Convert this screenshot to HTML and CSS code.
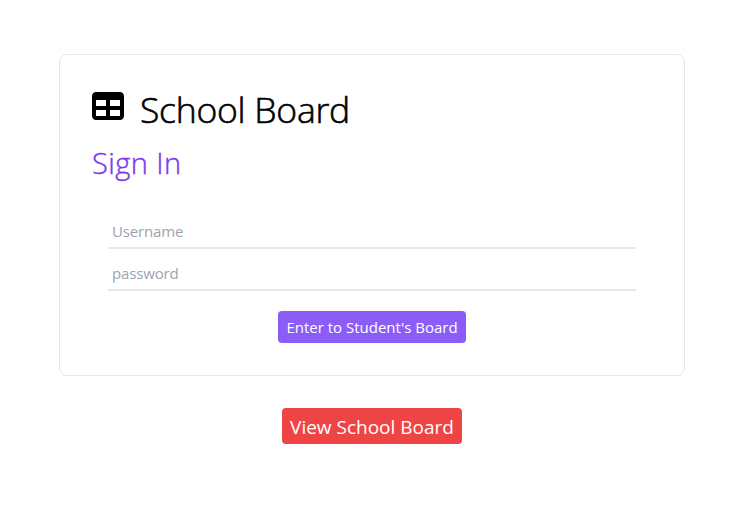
FILE: index.html
```html
<!DOCTYPE html>
<html lang="en">
<head>
<meta charset="utf-8">
<title>School Board</title>
<link rel="stylesheet" href="styles.css">
</head>
<body>
<main class="page">
  <section class="card">
    <h1 class="title">
      <svg class="icon" viewBox="0 0 512 512"><path fill-rule="evenodd" d="M64 32C28.700 32 0 60.700 0 96V416c0 35.300 28.700 64 64 64H448c35.300 0 64-28.700 64-64V96c0-35.300-28.700-64-64-64zM64 160H224v96H64zM288 160H448v96H288zM64 320H224v96H64zM288 320H448v96H288z"/></svg>
      <span class="title-text">School Board</span>
    </h1>
    <h2 class="subtitle"><span class="subtitle-text">Sign In</span></h2>
    <form class="form">
      <input class="field" type="text" placeholder="Username">
      <input class="field" type="password" placeholder="password">
      <button class="button enter" type="button">Enter to Student's Board</button>
    </form>
  </section>
  <button class="button view" type="button">View School Board</button>
</main>
</body>
</html>
```
FILE: styles.css
```css
* { box-sizing: border-box; }
body {
  margin: 0;
  background: #fff;
  color: #000;
  font-family: "Open Sans", "Noto Sans", sans-serif;
}
.page {
  display: flex;
  flex-direction: column;
  align-items: center;
  width: 744px;
  padding-top: 54px;
}
.card {
  width: 626px;
  height: 322px;
  padding: 32px;
  border: 1px solid #e5e7eb;
  border-radius: 8px;
}
.title {
  display: flex;
  gap: 16px;
  margin: 0;
  height: 45px;
  font-size: 35.5px;
  font-weight: 300;
  letter-spacing: -0.25px;
  line-height: 44px;
  white-space: nowrap;
  -webkit-text-stroke: 0.6px currentColor;
}
.icon { width: 32px; height: 32px; margin-top: 3px; }
.subtitle {
  margin: 9px 0 0;
  height: 44px;
  color: #7c3aed;
  font-size: 29px;
  font-weight: 300;
  letter-spacing: 0.45px;
  line-height: 44px;
  -webkit-text-stroke: 0.4px currentColor;
}
.form {
  display: flex;
  flex-direction: column;
  align-items: center;
  padding: 30px 16px 0;
}
.field {
  width: 100%;
  height: 34px;
  margin-bottom: 8px;
  padding: 4px;
  border: 0;
  border-bottom: 2px solid #e5e7eb;
  background: transparent;
  font: 400 15px "Open Sans", sans-serif;
  letter-spacing: -0.15px;
}
.field::placeholder { color: #9ca3af; }
.button {
  padding: 0;
  border: 0;
  border-radius: 4px;
  color: #fff;
  font-family: "Open Sans", sans-serif;
  white-space: nowrap;
}
.enter {
  width: 188px;
  height: 32px;
  margin-top: 12px;
  background: #8b5cf6;
  font-size: 15px;
}
.view {
  width: 180px;
  height: 36px;
  margin-top: 32px;
  padding-top: 2px;
  background: #ef4444;
  font-size: 19px;
}
```
